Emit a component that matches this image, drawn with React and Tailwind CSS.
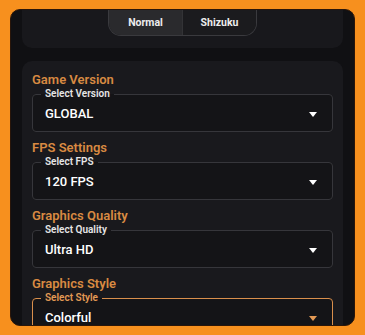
import React from "react";

const fields = [
  { title: "Game Version", label: "Select Version", value: "GLOBAL" },
  { title: "FPS Settings", label: "Select FPS", value: "120 FPS" },
  { title: "Graphics Quality", label: "Select Quality", value: "Ultra HD" },
  { title: "Graphics Style", label: "Select Style", value: "Colorful", active: true },
];

const Arrow = ({ color }) => (
  <svg width="8" height="5" viewBox="0 0 8 5">
    <polygon points="0,0 8,0 4,5" fill={color} />
  </svg>
);

const SelectField = ({ title, label, value, active }) => (
  <div className="flex flex-col">
    <h3 className="text-[13px] leading-4 font-semibold text-[#d88a42]">{title}</h3>
    <fieldset
      className={
        active
          ? "border border-[#d98f4c] rounded-[4px] bg-[#141417] pl-[12px] pr-[15px] pt-[6px] pb-[9px]"
          : "border border-[#36363b] rounded-[4px] bg-[#141417] pl-[12px] pr-[15px] pt-[6px] pb-[9px]"
      }
    >
      <legend
        className={
          active
            ? "ml-[-4px] px-1 text-[10px] leading-3 font-semibold text-[#e39a55]"
            : "ml-[-4px] px-1 text-[10px] leading-3 font-semibold text-[#e6e6e6]"
        }
      >
        {label}
      </legend>
      <div className="flex items-center justify-between">
        <span className="text-[13px] leading-4 font-medium text-white">{value}</span>
        <Arrow color={active ? "#e39a55" : "#ffffff"} />
      </div>
    </fieldset>
  </div>
);

export default function App() {
  return (
    <div
      className="w-[365px] h-[335px] bg-[#f7901e] pt-[9px] px-[10px] overflow-hidden"
      style={{ fontFamily: "Roboto, 'Noto Sans', sans-serif" }}
    >
      <div className="h-[317px] bg-[#101013] rounded-[10px] border border-[#2a160a] overflow-hidden">
        {/* MODE TOGGLE CARD */}
        <div className="mx-[11px] h-[38px] bg-[#18181c] rounded-b-[10px] flex justify-center">
          <div className="flex h-[26px] w-[149px] border border-t-0 border-[#3a3a3e] rounded-b-[13px] overflow-hidden">
            <div className="flex-1 bg-[#2a2a2d] flex items-center justify-center text-[10.5px] font-bold text-[#ededed]">
              Normal
            </div>
            <div className="flex-1 bg-[#1b1b1e] border-l border-[#333336] flex items-center justify-center text-[10.5px] font-bold text-[#ededed]">
              Shizuku
            </div>
          </div>
        </div>

        {/* SETTINGS CARD */}
        <div className="mx-[11px] mt-[13px] bg-[#19191d] rounded-[10px] px-[10px] pt-[11px] pb-4 flex flex-col gap-2">
          {fields.map((f) => (
            <SelectField key={f.title} {...f} />
          ))}
        </div>
      </div>
    </div>
  );
}
